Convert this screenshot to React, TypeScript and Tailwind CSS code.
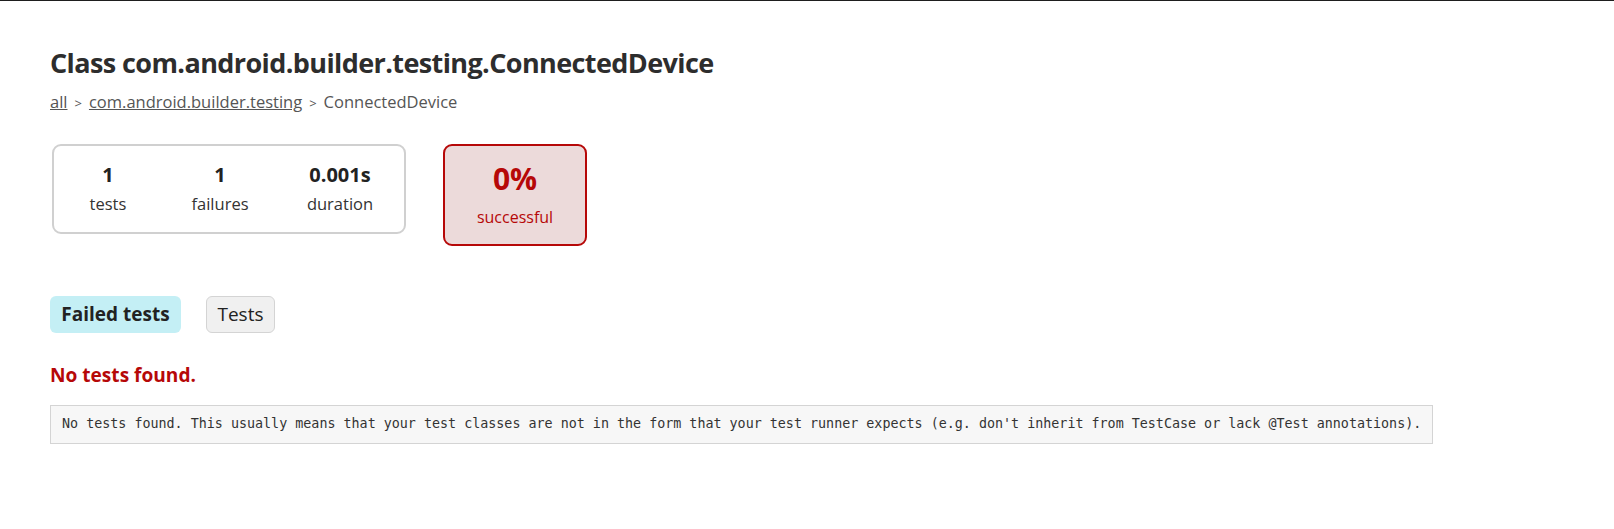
import React from "react";

const SANS = "font-['Open_Sans','Noto_Sans',sans-serif]";

export default function App() {
  return (
    <div className={`min-h-[529px] bg-white border-t border-[#1e1e1e] text-[#333] ${SANS}`}>
      <div className="px-[50px] pt-[44px]">
        {/* Heading */}
        <h1 className="text-[27px] font-bold leading-[36px] text-[#2d2d2d] tracking-[-0.6px]">
          Class com.android.builder.testing.ConnectedDevice
        </h1>
        <div className="mt-[10px] text-[16.5px] leading-[22px] text-[#555]">
          <a className="underline">all</a>
          <span className="mx-[7px] text-[13px]">&gt;</span>
          <a className="underline">com.android.builder.testing</a>
          <span className="mx-[7px] text-[13px]">&gt;</span>
          <span>ConnectedDevice</span>
        </div>

        {/* Summary */}
        <div className="mt-[30px] flex items-start">
          <div className="ml-[2px] w-[354px] h-[90px] border-2 border-[#d0d0d0] rounded-[9px] flex">
            <div className="w-[108px] pt-[17px] text-center">
              <div className="text-[20px] font-bold leading-[24px] text-[#222]">1</div>
              <div className="mt-[6px] text-[16.5px] leading-[22px]">tests</div>
            </div>
            <div className="w-[116px] pt-[17px] text-center">
              <div className="text-[20px] font-bold leading-[24px] text-[#222]">1</div>
              <div className="mt-[6px] text-[16.5px] leading-[22px]">failures</div>
            </div>
            <div className="w-[124px] pt-[17px] text-center">
              <div className="text-[20px] font-bold leading-[24px] text-[#222]">0.001s</div>
              <div className="mt-[6px] text-[16.5px] leading-[22px]">duration</div>
            </div>
          </div>
          <div className="ml-[37px] w-[144px] h-[102px] border-2 border-[#b60808] bg-[#ecdada] rounded-[9px] text-center text-[#b60808] pt-[14px]">
            <div className="text-[30px] font-bold leading-[38px]">0%</div>
            <div className="mt-[8px] text-[16px] leading-[22px]">successful</div>
          </div>
        </div>

        {/* Tabs */}
        <div className="mt-[50px] flex items-center gap-[25px]">
          <div className="h-[37px] w-[131px] rounded-[6px] bg-[#c4eff5] flex items-center justify-center text-[19px] font-bold text-[#222]">
            Failed tests
          </div>
          <div className="h-[37px] w-[69px] rounded-[6px] bg-[#f0f0f0] border border-[#d4d4d4] flex items-center justify-center text-[19px] text-[#222]">
            Tests
          </div>
        </div>

        <h2 className="mt-[29px] text-[19.1px] font-bold leading-[26px] text-[#b60808]">No tests found.</h2>

        <pre className="mt-[17px] w-[1383px] h-[39px] border border-[#d4d4d4] bg-[#f7f7f7] px-[11px] flex items-center font-['DejaVu_Sans_Mono','Liberation_Mono',monospace] text-[13.37px] text-[#333]">
          No tests found. This usually means that your test classes are not in the form that your test runner expects (e.g. don't inherit from TestCase or lack @Test annotations).
        </pre>
      </div>
    </div>
  );
}
